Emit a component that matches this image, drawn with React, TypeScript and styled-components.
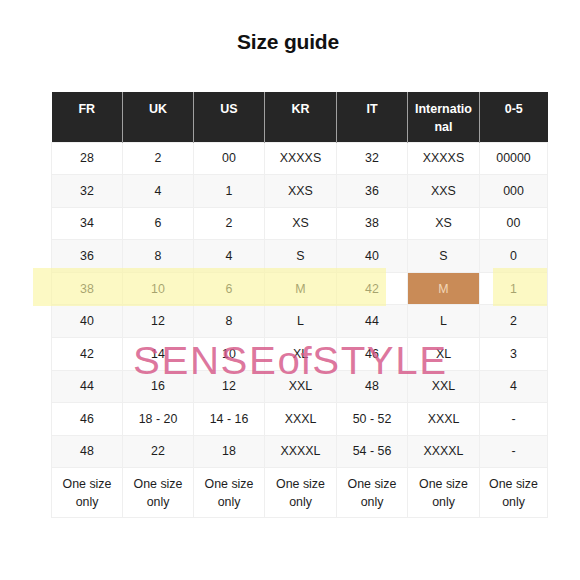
import React from "react";
import styled, { createGlobalStyle } from "styled-components";

const GlobalStyle = createGlobalStyle`
  html, body { margin: 0; padding: 0; background: #ffffff; }
  body { font-family: "Liberation Sans", Arial, Helvetica, sans-serif; }
`;

const Page = styled.div`
  width: 580px;
  height: 580px;
  box-sizing: border-box;
  padding-top: 30px;
  display: flex;
  flex-direction: column;
  align-items: center;
  overflow: hidden;
`;

const Title = styled.h1`
  margin: 0 4px 38px 0;
  font-size: 21px;
  line-height: 24px;
  font-weight: 700;
  color: #111;
  letter-spacing: -0.2px;
`;

const TableWrap = styled.div`
  position: relative;
  align-self: flex-start;
  margin-left: 51px;
`;

const Table = styled.table`
  width: 496px;
  table-layout: fixed;
  border-collapse: collapse;
  font-size: 12.4px;
  color: #1d1d1d;
`;

const HeadCell = styled.th`
  background: #262626;
  color: #ffffff;
  font-weight: 700;
  font-size: 12.5px;
  line-height: 18.3px;
  height: 50px;
  padding: 8px 6px 0;
  box-sizing: border-box;
  vertical-align: top;
  text-align: center;
  border-left: 1px solid #a0a0a0;
  word-break: break-all;
  &:first-child { border-left: none; }
`;

const Row = styled.tr<{ $alt: boolean }>`
  background: ${(p) => (p.$alt ? "#f8f8f8" : "#ffffff")};
`;

const Cell = styled.td<{ $tall?: boolean; $picked?: boolean }>`
  height: ${(p) => (p.$tall ? "50px" : "32.6px")};
  padding: 0 4px;
  box-sizing: border-box;
  text-align: center;
  vertical-align: middle;
  line-height: 18.3px;
  border: 1px solid #efefef;
  background: ${(p) => (p.$picked ? "#c98b57" : "transparent")};
  color: ${(p) => (p.$picked ? "#f2d6b6" : "inherit")};
`;

const Marker = styled.div<{ $left: number; $width: number }>`
  position: absolute;
  left: ${(p) => p.$left}px;
  top: 176px;
  width: ${(p) => p.$width}px;
  height: 38px;
  background: rgba(250, 245, 160, 0.62);
  pointer-events: none;
`;

const Watermark = styled.div`
  position: absolute;
  left: 82px;
  top: 250px;
  font-family: "Liberation Sans", Arial, sans-serif;
  font-size: 38px;
  line-height: 38px;
  font-weight: 400;
  letter-spacing: 1.5px;
  transform: scaleX(1.06);
  transform-origin: left center;
  color: rgba(214, 88, 136, 0.82);
  white-space: nowrap;
  pointer-events: none;
`;

const Small = styled.span`
  letter-spacing: 0.5px;
`;

const headers = ["FR", "UK", "US", "KR", "IT", "International", "0-5"];
const widths = [71, 71, 71, 72, 71, 72, 68];

const rows: string[][] = [
  ["28", "2", "00", "XXXXS", "32", "XXXXS", "00000"],
  ["32", "4", "1", "XXS", "36", "XXS", "000"],
  ["34", "6", "2", "XS", "38", "XS", "00"],
  ["36", "8", "4", "S", "40", "S", "0"],
  ["38", "10", "6", "M", "42", "M", "1"],
  ["40", "12", "8", "L", "44", "L", "2"],
  ["42", "14", "10", "XL", "46", "XL", "3"],
  ["44", "16", "12", "XXL", "48", "XXL", "4"],
  ["46", "18 - 20", "14 - 16", "XXXL", "50 - 52", "XXXL", "-"],
  ["48", "22", "18", "XXXXL", "54 - 56", "XXXXL", "-"],
];

export default function App() {
  return (
    <>
      <GlobalStyle />
      <Page>
        <Title>Size guide</Title>
        <TableWrap>
          <Table>
            <colgroup>
              {widths.map((w, i) => (
                <col key={i} style={{ width: w }} />
              ))}
            </colgroup>
            <thead>
              <tr>
                {headers.map((h) => (
                  <HeadCell key={h}>{h}</HeadCell>
                ))}
              </tr>
            </thead>
            <tbody>
              {rows.map((r, ri) => (
                <Row key={ri} $alt={ri % 2 === 1}>
                  {r.map((c, ci) => (
                    <Cell key={ci} $picked={ri === 4 && ci === 5}>
                      {c}
                    </Cell>
                  ))}
                </Row>
              ))}
              <Row $alt={false}>
                {headers.map((h) => (
                  <Cell key={h} $tall>
                    One size
                    <br />
                    only
                  </Cell>
                ))}
              </Row>
            </tbody>
          </Table>
          <Marker $left={-18} $width={353} />
          <Marker $left={442} $width={54} />
          <Watermark>
            SENSE<Small>of</Small>STYLE
          </Watermark>
        </TableWrap>
      </Page>
    </>
  );
}
